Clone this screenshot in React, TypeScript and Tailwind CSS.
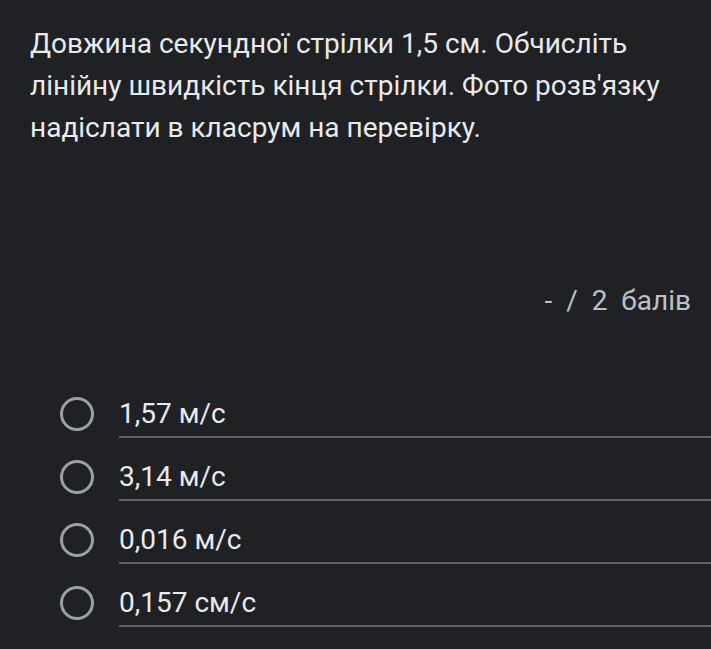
import React from "react";

const options = ["1,57 м/с", "3,14 м/с", "0,016 м/с", "0,157 см/с"];

export default function App() {
  return (
    <div
      className="w-[711px] h-[649px] bg-[#202124] text-[#e8eaed] overflow-hidden"
      style={{ fontFamily: "Roboto, 'Noto Sans', sans-serif" }}
    >
      <div className="pl-[30px] pr-[10px] pt-[23px] text-[28px] leading-[42px] whitespace-nowrap">
        Довжина секундної стрілки 1,5 см. Обчисліть
        <br />
        лінійну швидкість кінця стрілки. Фото розв'язку
        <br />
        надіслати в класрум на перевірку.
      </div>
      <div className="mt-[137px] pr-[20px] flex justify-end text-[28px] leading-[30px] text-[#bdc1c6]">
        <span className="whitespace-pre">-  /  2  балів</span>
      </div>
      <div className="mt-[66px] flex flex-col">
        {options.map((o) => (
          <div key={o} className="flex items-center h-[63px]">
            <div className="w-[119px] shrink-0 flex">
              <div className="w-[34px] h-[34px] rounded-full border-[3px] border-[#9aa0a6] ml-[60px]" />
            </div>
            <div className="flex-1 h-full flex flex-col justify-center relative">
              <span className="text-[28px] leading-[30px] text-[#e8eaed]">{o}</span>
              <div className="absolute left-0 right-0 bottom-[7px] h-[2px] bg-[#5f6368]" />
            </div>
          </div>
        ))}
      </div>
    </div>
  );
}
